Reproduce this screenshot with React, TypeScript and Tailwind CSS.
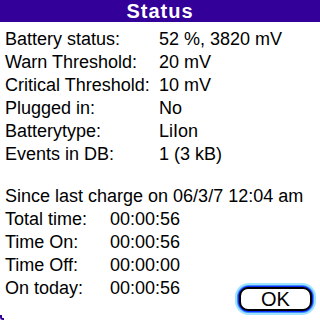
const top = [
  ["Battery status:", "52 %, 3820 mV"],
  ["Warn Threshold:", "20 mV"],
  ["Critical Threshold:", "10 mV"],
  ["Plugged in:", "No"],
  ["Batterytype:", "LiIon"],
  ["Events in DB:", "1 (3 kB)"],
]

const since = [
  ["Total time:", "00:00:56"],
  ["Time On:", "00:00:56"],
  ["Time Off:", "00:00:00"],
]

function Row({ label, value, col }: { label: string; value: string; col: string }) {
  return (
    <div className="flex h-[23px] items-center">
      <span className={col}>{label}</span>
      <span>{value}</span>
    </div>
  )
}

export default function App() {
  return (
    <div className="relative flex h-[320px] w-[320px] flex-col overflow-hidden bg-white font-['Liberation_Sans',Arial,sans-serif] text-[18px] leading-none text-black">
      <div className="flex h-[22px] shrink-0 items-center justify-center bg-[#330099]">
        <span className="text-[20px] font-bold tracking-[1px] text-white">Status</span>
      </div>

      <div className="flex flex-col px-[5px] pt-[5px]">
        {top.map(([l, v]) => (
          <Row key={l} label={l} value={v} col="w-[154px] shrink-0" />
        ))}
      </div>

      <div className="mt-[19px] flex flex-col pl-[5px] pr-[4px]">
        <div className="flex h-[23px] items-center whitespace-nowrap">Since last charge on 06/3/7 12:04 am</div>
        {since.map(([l, v]) => (
          <Row key={l} label={l} value={v} col="w-[105px] shrink-0" />
        ))}
        <div className="flex h-[23px] items-start justify-between">
          <div className="flex h-[23px] items-center">
            <span className="w-[105px] shrink-0">On today:</span>
            <span>00:00:56</span>
          </div>
          <div className="mt-[7px] rounded-[14px] bg-[#9fe3ff] p-[2px]">
            <div className="rounded-[12px] bg-[#3d8bff] p-[1px]">
              <div className="rounded-[11px] bg-[#0a2cff] p-[1px]">
                <div className="flex h-[24px] w-[73px] items-center justify-center rounded-[9px] border-2 border-black bg-white text-[20px]">
                  OK
                </div>
              </div>
            </div>
          </div>
        </div>
      </div>

      <div className="absolute bottom-0 left-0 h-[5px] w-[4px] rounded-bl-[3px] border-b-2 border-l-2 border-[#330099]" />
    </div>
  )
}
